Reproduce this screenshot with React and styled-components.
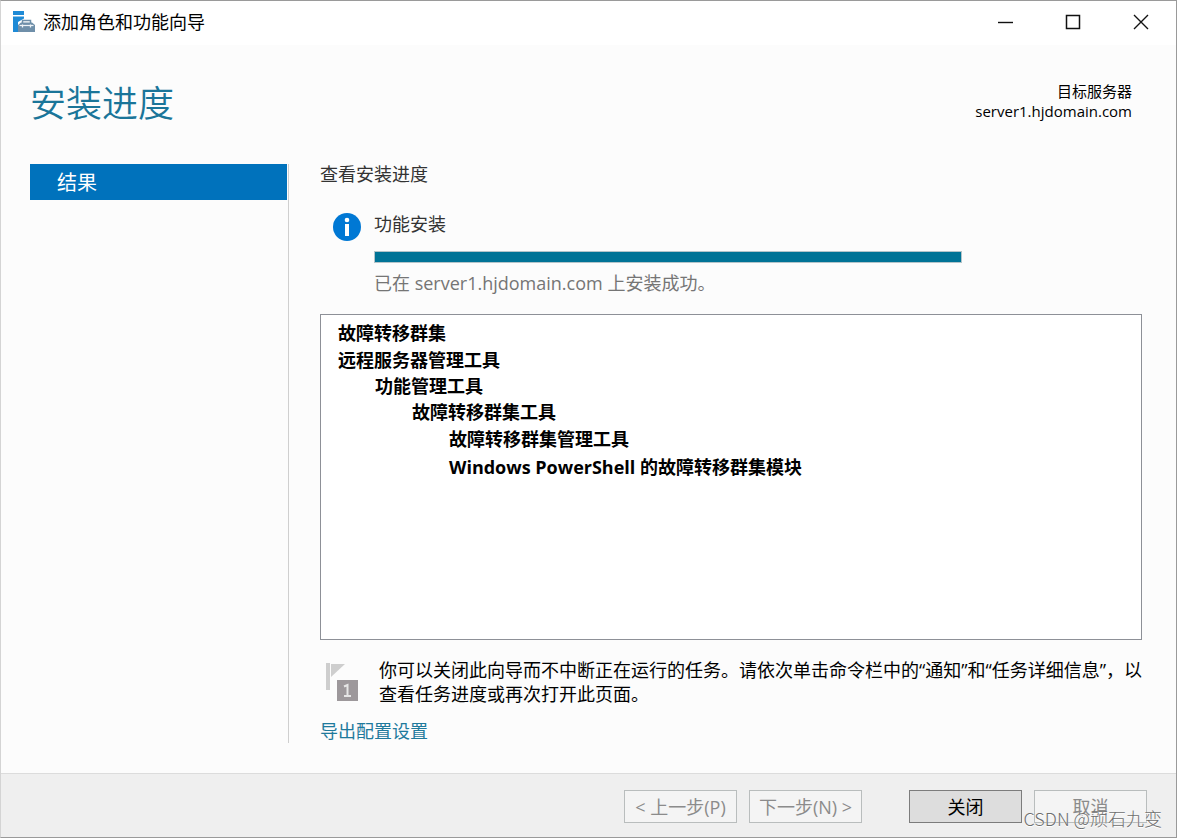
import React from "react";
import styled, { createGlobalStyle } from "styled-components";

const Global = createGlobalStyle`
  *, *::before, *::after { box-sizing: border-box; }
  body {
    margin: 0;
    background: #fcfcfc;
    color: #1a1a1a;
    font-family: "Open Sans", "Noto Sans CJK SC", sans-serif;
    font-size: 18px;
    line-height: 24px;
  }
  h1, h2, p, ul { margin: 0; padding: 0; font-weight: 400; }
  button { font: inherit; }
`;

const Window = styled.div`
  position: relative;
  display: flex;
  flex-direction: column;
  min-height: 100vh;
  border: 1px solid #9a9a9a;
  border-left-color: #d4d4d4;
`;

const TitleBar = styled.header`
  display: flex;
  align-items: center;
  height: 44px;
  padding: 0 1px 2px 12px;
  background: #fff;
`;

const TitleText = styled.span`
  flex: 1;
  margin-left: 8px;
  color: #000;
`;

const CaptionButton = styled.button`
  display: flex;
  align-items: center;
  justify-content: center;
  width: 68px;
  height: 42px;
  padding: 0;
  border: 0;
  background: transparent;
`;

const PageHeader = styled.div`
  display: flex;
  justify-content: space-between;
  align-items: flex-start;
  height: 119px;
  padding: 32px 44px 0 29px;
`;

const Heading = styled.h1`
  && {
    color: #1a7599;
    font-size: 36px;
    font-weight: 350;
    line-height: 54px;
  }
`;

const Target = styled.div`
  padding-top: 4px;
  color: #000;
  font-size: 15px;
  line-height: 20px;
  text-align: right;
`;

const Body = styled.div`
  display: flex;
  flex: 1;
  padding: 0 34px 30px 29px;
`;

const Nav = styled.nav`
  flex: none;
  width: 259px;
  padding-right: 1px;
  border-right: 1px solid #cfcfcf;
`;

const NavItem = styled.a`
  display: block;
  height: 36px;
  padding-left: 27px;
  background: #0072bc;
  color: #fff;
  font-size: 20px;
  line-height: 38px;
  text-decoration: none;
`;

const Main = styled.main`
  display: flex;
  flex: 1;
  flex-direction: column;
  min-width: 0;
  padding-left: 31px;
`;

const SubHeading = styled.h2`
  font-size: 18px;
  line-height: 20px;
  color: #333;
`;

const Status = styled.section`
  display: flex;
  gap: 13px;
  margin-top: 28px;
  padding-left: 13px;
`;

const StatusBody = styled.div`
  flex: 1;
  min-width: 0;
`;

const StatusTitle = styled.p`
  color: #333;
`;

const Progress = styled.div`
  max-width: 588px;
  height: 12px;
  margin: 15px 0 8px;
  border: 1px solid #b4c4c9;
`;

const ProgressFill = styled.div`
  height: 100%;
  background: #007396;
`;

const StatusNote = styled.p`
  color: #757575;
  font-size: 18px;
`;

const InfoIcon = styled.svg`
  flex: none;
  margin-top: 1px;
`;

const Results = styled.ul`
  flex: 1;
  margin-top: 19px;
  padding: 4px 17px;
  border: 1px solid #8d9097;
  background: #fff;
  color: #000;
  font-weight: 700;
  list-style: none;
`;

const ResultRow = styled.li`
  padding-left: ${(p) => p.$level * 37}px;
  line-height: ${(p) => (p.$group ? 26 : 28)}px;
`;

const Hint = styled.div`
  display: flex;
  gap: 21px;
  margin: 18px 0 13px;
  padding-left: 6px;
  color: #000;
`;

const HintText = styled.p`
  flex: 1;
  margin-right: -8px;
`;

const FlagIcon = styled.svg`
  flex: none;
  margin-top: 5px;
`;

const ExportLink = styled.a`
  align-self: flex-start;
  color: #1f7a9c;
  text-decoration: none;
`;

const Footer = styled.footer`
  display: flex;
  justify-content: flex-end;
  gap: 12px;
  padding: 16px 29px 14px;
  border-top: 1px solid #dcdcdc;
  background: #efefef;
`;

const FooterButton = styled.button`
  width: 113px;
  height: 33px;
  margin-left: ${(p) => (p.$apart ? 35 : 0)}px;
  padding: 0;
  border: 1px solid ${(p) => (p.$primary ? "#7c7c7c" : "#b9bdbd")};
  background: ${(p) => (p.$primary ? "#dddddd" : "#f4f4f4")};
  color: ${(p) => (p.$primary ? "#000" : "#8b8b8b")};
  line-height: 30px;
  white-space: pre;
`;

const Watermark = styled.div`
  position: absolute;
  right: 14px;
  bottom: 7px;
  color: #6e6e6e;
  font-family: "Noto Sans CJK SC", sans-serif;
  font-weight: 300;
  text-shadow: 0 1px 0 #fff;
  pointer-events: none;
`;

const results = [
  { text: "故障转移群集", level: 0 },
  { text: "远程服务器管理工具", level: 0, group: true },
  { text: "功能管理工具", level: 1, group: true },
  { text: "故障转移群集工具", level: 2, group: true },
  { text: "故障转移群集管理工具", level: 3 },
  { text: "Windows PowerShell 的故障转移群集模块", level: 3 },
];

export default function App() {
  const progress = 100;
  return (
    <>
      <Global />
      <Window>
        <TitleBar>
          <svg width="22" height="22" viewBox="0 0 22 22" aria-hidden="true">
            <path d="M0 0h11v4H0zM0 5.500h11v2L5 11v10H0z" fill="#1e8ad6" />
            <path d="M9.500 12V9.500h8V12" fill="none" stroke="#6f8fa9" strokeWidth="1.500" />
            <path d="M5 14l3-2.500h11l3 2.500v7H5z" fill="#6f8fa9" />
            <path d="M6.500 14.500h14" stroke="#eef3f7" strokeWidth="1.200" />
            <path d="M9.500 13.500v3M17.500 13.500v3" stroke="#eef3f7" strokeWidth="1.300" />
          </svg>
          <TitleText>添加角色和功能向导</TitleText>
          <CaptionButton aria-label="最小化">
            <svg width="16" height="16" viewBox="0 0 16 16"><path d="M1 8.500h15" stroke="#111" strokeWidth="1.400" /></svg>
          </CaptionButton>
          <CaptionButton aria-label="最大化">
            <svg width="16" height="16" viewBox="0 0 16 16"><path d="M1.500 1.500h13v13h-13z" fill="none" stroke="#111" strokeWidth="1.500" /></svg>
          </CaptionButton>
          <CaptionButton aria-label="关闭窗口">
            <svg width="16" height="16" viewBox="0 0 16 16"><path d="M1 1l14 14M15 1L1 15" stroke="#111" strokeWidth="1.400" /></svg>
          </CaptionButton>
        </TitleBar>

        <PageHeader>
          <Heading>安装进度</Heading>
          <Target>
            <div>目标服务器</div>
            <div>server1.hjdomain.com</div>
          </Target>
        </PageHeader>

        <Body>
          <Nav>
            <NavItem href="#results" aria-current="step">结果</NavItem>
          </Nav>
          <Main id="results">
            <SubHeading>查看安装进度</SubHeading>
            <Status>
              <InfoIcon width="28" height="28" viewBox="0 0 28 28" aria-hidden="true">
                <circle cx="14" cy="14" r="14" fill="#0078d4" />
                <circle cx="14" cy="7" r="2.300" fill="#fff" />
                <path d="M12 11h4v12h-4z" fill="#fff" />
              </InfoIcon>
              <StatusBody>
                <StatusTitle>功能安装</StatusTitle>
                <Progress role="progressbar" aria-label="功能安装" aria-valuenow={progress}>
                  <ProgressFill style={{ width: `${progress}%` }} />
                </Progress>
                <StatusNote>已在 server1.hjdomain.com 上安装成功。</StatusNote>
              </StatusBody>
            </Status>
            <Results>
              {results.map((r) => (
                <ResultRow key={r.text} $level={r.level} $group={r.group}>{r.text}</ResultRow>
              ))}
            </Results>
            <Hint>
              <FlagIcon width="32" height="38" viewBox="0 0 32 38" aria-hidden="true">
                <path d="M0 0h4v27H0z" fill="#cecece" />
                <path d="M5 1h14L5 14z" fill="#cecece" />
                <path d="M11 17h21v21H11z" fill="#9d989b" />
                <path d="M18 23.500l3.500-1.500v11M18 33h7" fill="none" stroke="#e6e6e6" strokeWidth="2" />
              </FlagIcon>
              <HintText>
                你可以关闭此向导而不中断正在运行的任务。请依次单击命令栏中的“通知”和“任务详细信息”，以查看任务进度或再次打开此页面。
              </HintText>
            </Hint>
            <ExportLink href="#export">导出配置设置</ExportLink>
          </Main>
        </Body>

        <Footer>
          <FooterButton disabled>&lt; 上一步(P)</FooterButton>
          <FooterButton disabled>下一步(N) &gt;</FooterButton>
          <FooterButton $primary $apart>关闭</FooterButton>
          <FooterButton disabled>取消</FooterButton>
        </Footer>
        <Watermark>CSDN @顽石九变</Watermark>
      </Window>
    </>
  );
}
